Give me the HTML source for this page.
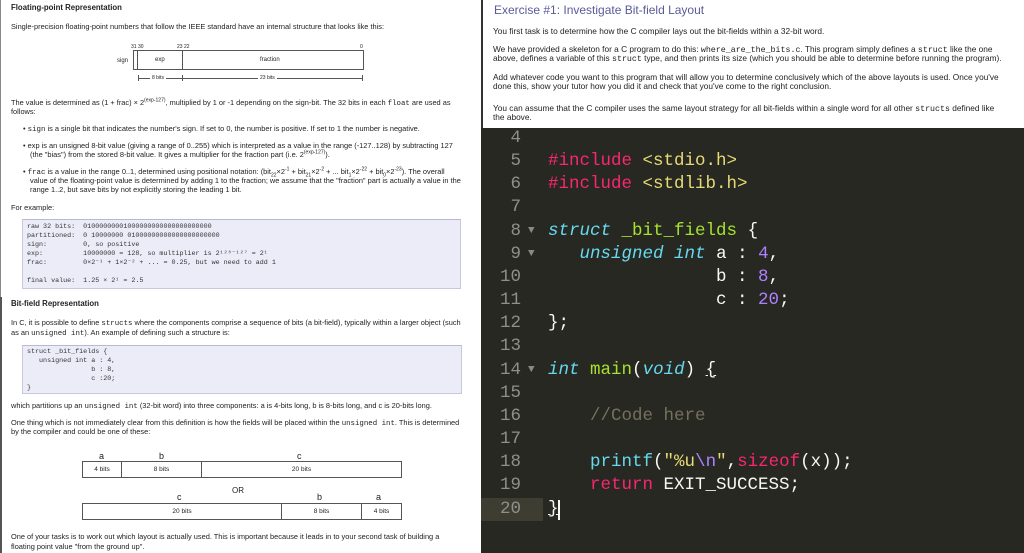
<!DOCTYPE html>
<html><head><meta charset="utf-8"><style>
*{margin:0;padding:0;box-sizing:border-box}
body{width:1024px;height:553px;overflow:hidden;background:#fff;position:relative;font-family:"Liberation Sans",sans-serif;color:#222}
sup,sub{line-height:0;font-size:5px}
.t{position:absolute;white-space:nowrap;font-size:7.4px;line-height:9px}
.b{font-weight:bold;font-size:7.8px}
.m{font-family:"Liberation Mono",monospace}
.r{font-size:8.3px!important}
.cb{position:absolute;background:#ececf8;border:1px solid #c8c8dc;border-top:1px solid #b8b8d0}
.cb div{position:absolute;white-space:pre;font-family:"Liberation Mono",monospace;font-size:6.7px;line-height:9px;color:#333}
.box{position:absolute;border:1px solid #555;height:17px}
.box span{position:absolute;top:0;height:15px;border-right:1px solid #555;font-size:6.5px;line-height:15px;text-align:center}
.lab{position:absolute;font-size:9px;color:#222}
#ed{position:absolute;left:481px;top:128px;width:543px;height:425px;background:#272822;font-family:"Liberation Mono",monospace;font-size:17.5px}
.ln{position:absolute;left:0;width:40px;text-align:right;color:#90908a;height:23px;line-height:23px}
.cd{position:absolute;left:67px;white-space:pre;color:#f8f8f2;height:23px;line-height:23px}
.ar{position:absolute;left:47px;color:#8a8a84;font-size:11px;line-height:23px}
.p{color:#f92672}.y{color:#e6db74}.c{color:#66d9ef}.i{font-style:italic}.g{color:#a6e22e}.v{color:#ae81ff}.cm{color:#75715e}
</style></head><body>
<div style="position:absolute;left:0;top:0;width:1px;height:297px;background:#888"></div>
<div style="position:absolute;left:0;top:297px;width:2px;height:256px;background:#555"></div>

<div class="t b" style="left:11px;top:3px">Floating-point Representation</div>
<div class="t" style="left:11px;top:22px">Single-precision floating-point numbers that follow the IEEE standard have an internal structure that looks like this:</div>
<div class="t" style="left:131px;top:44px;font-size:5px;line-height:6px">31 30</div>
<div class="t" style="left:177px;top:44px;font-size:5px;line-height:6px">23 22</div>
<div class="t" style="left:360px;top:44px;font-size:5px;line-height:6px">0</div>
<div class="t" style="left:117px;top:57px;font-size:6px">sign</div>
<div style="position:absolute;left:133px;top:50px;width:231px;height:20px;border:1px solid #555"></div>
<div style="position:absolute;left:137px;top:50px;width:1px;height:20px;background:#555"></div>
<div style="position:absolute;left:182px;top:50px;width:1px;height:20px;background:#555"></div>
<div class="t" style="left:155px;top:56px;font-size:6px">exp</div>
<div class="t" style="left:260px;top:56px;font-size:6px">fraction</div>
<div style="position:absolute;left:138px;top:78px;width:224px;height:1px;background:#555"></div>
<div style="position:absolute;left:138px;top:75px;width:1px;height:6px;background:#555"></div>
<div style="position:absolute;left:182px;top:75px;width:1px;height:6px;background:#555"></div>
<div style="position:absolute;left:362px;top:75px;width:1px;height:6px;background:#555"></div>
<div class="t" style="left:150px;top:74px;font-size:5px;background:#fff;padding:0 2px">8 bits</div>
<div class="t" style="left:258px;top:74px;font-size:5px;background:#fff;padding:0 2px">23 bits</div>

<div class="t" style="left:11px;top:98px">The value is determined as (1 + frac) × 2<sup>(exp-127)</sup>, multiplied by 1 or -1 depending on the sign-bit. The 32 bits in each <span class="m">float</span> are used as</div>
<div class="t" style="left:11px;top:107px">follows:</div>
<div class="t" style="left:23px;top:124px">• <span class="m">sign</span> is a single bit that indicates the number's sign. If set to 0, the number is positive. If set to 1 the number is negative.</div>
<div class="t" style="left:23px;top:141px">• exp is an unsigned 8-bit value (giving a range of 0..255) which is interpreted as a value in the range (-127..128) by subtracting 127</div>
<div class="t" style="left:30px;top:150px">(the "bias") from the stored 8-bit value. It gives a multiplier for the fraction part (i.e. 2<sup>(exp-127)</sup>).</div>
<div class="t" style="left:23px;top:167px">• <span class="m">frac</span> is a value in the range 0..1, determined using positional notation: (bit<sub>22</sub>×2<sup>-1</sup> + bit<sub>21</sub>×2<sup>-2</sup> + ... bit<sub>1</sub>×2<sup>-22</sup> + bit<sub>0</sub>×2<sup>-23</sup>). The overall</div>
<div class="t" style="left:30px;top:176px">value of the floating-point value is determined by adding 1 to the fraction; we assume that the "fraction" part is actually a value in the</div>
<div class="t" style="left:30px;top:185px">range 1..2, but save bits by not explicitly storing the leading 1 bit.</div>
<div class="t" style="left:11px;top:203px">For example:</div>
<div class="cb" style="left:22px;top:219px;width:439px;height:70px">
<div style="left:4px;top:3px">raw 32 bits:  01000000001000000000000000000000
partitioned:  0 10000000 01000000000000000000000
sign:         0, so positive
exp:          10000000 = 128, so multiplier is 2¹²⁸⁻¹²⁷ = 2¹
frac:         0×2⁻¹ + 1×2⁻² + ... = 0.25, but we need to add 1

final value:  1.25 × 2¹ = 2.5</div></div>

<div class="t b" style="left:11px;top:299px">Bit-field Representation</div>
<div class="t" style="left:11px;top:318px">In C, it is possible to define <span class="m">structs</span> where the components comprise a sequence of bits (a bit-field), typically within a larger object (such</div>
<div class="t" style="left:11px;top:328px">as an <span class="m">unsigned int</span>). An example of defining such a structure is:</div>
<div class="cb" style="left:22px;top:345px;width:440px;height:49px">
<div style="left:4px;top:2px">struct _bit_fields {
   unsigned int a : 4,
                b : 8,
                c :20;
}</div></div>
<div class="t" style="left:11px;top:401px">which partitions up an <span class="m">unsigned int</span> (32-bit word) into three components: a is 4-bits long, b is 8-bits long, and c is 20-bits long.</div>
<div class="t" style="left:11px;top:418px">One thing which is not immediately clear from this definition is how the fields will be placed within the <span class="m">unsigned int</span>. This is determined</div>
<div class="t" style="left:11px;top:427px">by the compiler and could be one of these:</div>

<div class="lab" style="left:99px;top:451px">a</div>
<div class="lab" style="left:159px;top:451px">b</div>
<div class="lab" style="left:297px;top:451px">c</div>
<div class="box" style="left:82px;top:461px;width:320px"><span style="left:0;width:39px">4 bits</span><span style="left:39px;width:80px">8 bits</span><span style="left:119px;width:199px;border:0">20 bits</span></div>
<div class="t" style="left:232px;top:486px;font-size:8px">OR</div>
<div class="lab" style="left:177px;top:492px">c</div>
<div class="lab" style="left:317px;top:492px">b</div>
<div class="lab" style="left:376px;top:492px">a</div>
<div class="box" style="left:82px;top:503px;width:320px"><span style="left:0;width:199px">20 bits</span><span style="left:199px;width:80px">8 bits</span><span style="left:279px;width:39px;border:0">4 bits</span></div>

<div class="t" style="left:11px;top:532px">One of your tasks is to work out which layout is actually used. This is important because it leads in to your second task of building a</div>
<div class="t" style="left:11px;top:542px">floating point value "from the ground up".</div>

<!-- right panel -->
<div style="position:absolute;left:481px;top:0;width:2px;height:128px;background:#333"></div>
<div class="t" style="left:494px;top:3px;font-size:12px;line-height:14px;color:#5a5a9a">Exercise #1: Investigate Bit-field Layout</div>
<div class="t r" style="left:493px;top:27px">You first task is to determine how the C compiler lays out the bit-fields within a 32-bit word.</div>
<div class="t r" style="left:493px;top:45px">We have provided a skeleton for a C program to do this: <span class="m">where_are_the_bits.c</span>. This program simply defines a <span class="m">struct</span> like the one</div>
<div class="t r" style="left:493px;top:54px">above, defines a variable of this <span class="m">struct</span> type, and then prints its size (which you should be able to determine before running the program).</div>
<div class="t r" style="left:493px;top:73px">Add whatever code you want to this program that will allow you to determine conclusively which of the above layouts is used. Once you've</div>
<div class="t r" style="left:493px;top:82px">done this, show your tutor how you did it and check that you've come to the right conclusion.</div>
<div class="t r" style="left:493px;top:104px">You can assume that the C compiler uses the same layout strategy for all bit-fields within a single word for all other <span class="m">structs</span> defined like</div>
<div class="t r" style="left:493px;top:113px">the above.</div>

<div id="ed">
<div style="position:absolute;left:0;top:370px;width:62px;height:23px;background:#3e3d32"></div>
<div class="ln" style="top:-1px">4</div>
<div class="ln" style="top:22px">5</div><div class="cd" style="top:22px"><span class="p">#include</span> <span class="y">&lt;stdio.h&gt;</span></div>
<div class="ln" style="top:45px">6</div><div class="cd" style="top:45px"><span class="p">#include</span> <span class="y">&lt;stdlib.h&gt;</span></div>
<div class="ln" style="top:68px">7</div>
<div class="ln" style="top:92px">8</div><div class="ar" style="top:92px">▼</div><div class="cd" style="top:92px"><span class="c i">struct</span> <span class="g">_bit_fields</span> {</div>
<div class="ln" style="top:115px">9</div><div class="ar" style="top:115px">▼</div><div class="cd" style="top:115px">   <span class="c i">unsigned</span> <span class="c i">int</span> a : <span class="v">4</span>,</div>
<div class="ln" style="top:138px">10</div><div class="cd" style="top:138px">                b : <span class="v">8</span>,</div>
<div class="ln" style="top:161px">11</div><div class="cd" style="top:161px">                c : <span class="v">20</span>;</div>
<div class="ln" style="top:184px">12</div><div class="cd" style="top:184px">};</div>
<div class="ln" style="top:207px">13</div>
<div class="ln" style="top:231px">14</div><div class="ar" style="top:231px">▼</div><div class="cd" style="top:231px"><span class="c i">int</span> <span class="g">main</span>(<span class="c i">void</span>) <u>{</u></div>
<div class="ln" style="top:254px">15</div>
<div class="ln" style="top:277px">16</div><div class="cd cm" style="top:277px">    //Code here</div>
<div class="ln" style="top:300px">17</div>
<div class="ln" style="top:323px">18</div><div class="cd" style="top:323px">    <span class="c">printf</span>(<span class="y">"%u</span><span class="v">\n</span><span class="y">"</span>,<span class="p">sizeof</span>(x));</div>
<div class="ln" style="top:346px">19</div><div class="cd" style="top:346px">    <span class="p">return</span> EXIT_SUCCESS;</div>
<div class="ln" style="top:370px">20</div><div class="cd" style="top:370px"><u>}</u></div>
<div style="position:absolute;left:77px;top:372px;width:2px;height:20px;background:#f8f8f0"></div>
</div>
</body></html>
